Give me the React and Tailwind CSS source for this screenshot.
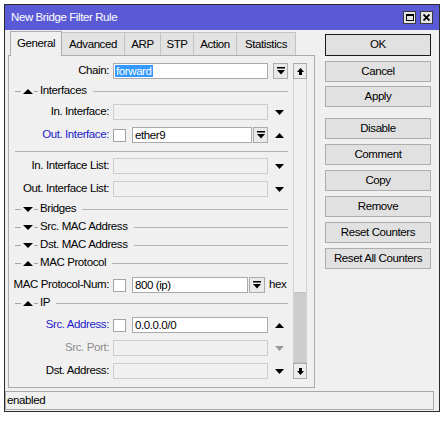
import React from 'react';

const Tri = ({ dir = 'down', color = '#000', w = 9, h = 5 }) => (
  <svg width={w} height={h} viewBox={`0 0 ${w} ${h}`} className="block">
    {dir === 'down'
      ? <polygon points={`0,0 ${w},0 ${w / 2},${h}`} fill={color} />
      : <polygon points={`0,${h} ${w},${h} ${w / 2},0`} fill={color} />}
  </svg>
);

const ComboBtn = ({ className = '' }) => (
  <div className={`w-[15px] h-[16px] shrink-0 border border-[#acacac] bg-[#e9e9e9] flex items-center justify-center ${className}`}>
    <svg width="8" height="8" viewBox="0 0 8 8">
      <rect x="0" y="0" width="8" height="1.5" fill="#000" />
      <polygon points="0,3 8,3 4,7.5" fill="#000" />
    </svg>
  </div>
);

const Field = ({ value, disabled, className = 'w-[155px]', selected }) => (
  <div
    className={`h-[16px] shrink-0 border flex items-center px-[1px] ${
      disabled ? 'bg-[#f0f0f0] border-[#cccccc]' : 'bg-white border-[#a9a9a9]'
    } ${className}`}
  >
    {value && (
      <span className={`leading-[12px] px-[1px] ${selected ? 'bg-[#3399ff] text-white' : ''}`}>{value}</span>
    )}
  </div>
);

const Check = () => <div className="w-[13px] h-[13px] shrink-0 border border-[#a4a4a4] bg-white" />;

const Label = ({ children, color = 'text-black' }) => (
  <div className={`w-[101px] shrink-0 text-right pr-[1px] whitespace-nowrap ${color}`}>{children}</div>
);

// little triangle column right of the fields
const Trig = ({ children }) => (
  <div className="w-[22px] shrink-0 flex items-center justify-center pl-[1px]">{children}</div>
);

const Row = ({ label, color, children, trig, className = '' }) => (
  <div className={`flex items-center h-[16px] ${className}`}>
    <Label color={color}>{label}</Label>
    <div className="flex items-center ml-[3px] w-[155px] shrink-0">{children}</div>
    <Trig>{trig}</Trig>
  </div>
);

const Section = ({ label, open, className = 'h-[18px]' }) => (
  <div className={`flex items-center pl-[6px] pr-[2px] ${className}`}>
    <div className="w-[6px] h-px bg-[#a6a6a6]" />
    <div className="ml-[2px]">
      <Tri dir={open ? 'up' : 'down'} w={10} h={5} />
    </div>
    <div className="w-[4px] h-px bg-[#a6a6a6] ml-px" />
    <span className="ml-[2px]">{label}</span>
    <div className="flex-1 h-px bg-[#b4b4b4] ml-[6px]" />
  </div>
);

const ScrollArrow = ({ up }) => (
  <div className="h-[16px] border border-[#acacac] bg-[#ececec] flex items-center justify-center shrink-0">
    <svg width="7" height="7" viewBox="0 0 7 7" className={up ? '' : 'rotate-180'}>
      <polygon points="3.5,0 7,4 0,4" fill="#000" />
      <rect x="2" y="4" width="3" height="3" fill="#000" />
    </svg>
  </div>
);

const tabs = [
  ['General', 'w-[52px]'],
  ['Advanced', 'w-[63px]'],
  ['ARP', 'w-[36px]'],
  ['STP', 'w-[33px]'],
  ['Action', 'w-[43px]'],
  ['Statistics', 'w-[59px]'],
];

const buttons = [
  ['OK', 'mt-[4px] h-[22px] border-[#1a1a1a]'],
  ['Cancel', 'mt-[5px] h-[21px] border-[#adadad]'],
  ['Apply', 'mt-[4px] h-[21px] border-[#adadad]'],
  ['Disable', 'mt-[11px] h-[21px] border-[#adadad]'],
  ['Comment', 'mt-[5px] h-[21px] border-[#adadad]'],
  ['Copy', 'mt-[5px] h-[21px] border-[#adadad]'],
  ['Remove', 'mt-[5px] h-[21px] border-[#adadad]'],
  ['Reset Counters', 'mt-[5px] h-[21px] border-[#adadad]'],
  ['Reset All Counters', 'mt-[5px] h-[21px] border-[#adadad]'],
];

export default function App() {
  return (
    <div className="w-[447px] h-[422px] bg-white pt-[4px] pl-[4px] font-['Liberation_Sans',Arial,sans-serif] text-[11.5px] tracking-[-0.4px] text-black leading-none">
      <div className="w-[436px] border border-[#2b2b2b] bg-[#f0f0f0]">
        {/* title bar */}
        <div className="h-[25px] bg-[#5a5ad6] flex items-center pl-[6px] pr-[6px]">
          <span className="text-white flex-1">New Bridge Filter Rule</span>
          <div className="w-[13px] h-[13px] bg-[#e4e4e4] border border-[#3a3a3a] flex items-center justify-center">
            <div className="w-[8px] h-[7px] border border-black border-t-2" />
          </div>
          <div className="w-[13px] h-[13px] bg-[#e4e4e4] border border-[#3a3a3a] flex items-center justify-center ml-[4px]">
            <svg width="7" height="7" viewBox="0 0 7 7">
              <path d="M0.5 0.5 L6.5 6.5 M6.5 0.5 L0.5 6.5" stroke="#000" strokeWidth="1.8" />
            </svg>
          </div>
        </div>

        <div className="flex pl-[3px]">
          {/* left: tabs + panel */}
          <div className="w-[307px] shrink-0">
            <div className="h-[25px] flex items-end pl-[2px]">
              {tabs.map(([t, w], i) =>
                i === 0 ? (
                  <div key={t} className={`${w} h-[25px] -mb-px relative z-10 bg-[#f0f0f0] border border-b-0 border-[#acacac] flex items-center justify-center pb-[1px]`}>
                    {t}
                  </div>
                ) : (
                  <div key={t} className={`${w} h-[23px] bg-[#e3e3e3] border border-l-0 border-b-0 border-[#c4c4c4] flex items-center justify-center pt-[2px]`}>
                    {t}
                  </div>
                )
              )}
            </div>

            <div className="h-[333px] border border-[#acacac] flex pt-[7px] pb-[8px] pr-[7px]">
              <div className="w-[281px] shrink-0">
                <Row label="Chain:" trig={<ComboBtn className="ml-[2px] w-[14px]" />}>
                  <Field value="forward" selected />
                </Row>
                <Section label="Interfaces" open className="h-[16px] mt-[4px]" />
                <Row label="In. Interface:" className="mt-[5px]" trig={<Tri />}>
                  <Field disabled />
                </Row>
                <Row label="Out. Interface:" color="text-[#1c1cc8]" className="mt-[7px]" trig={<Tri dir="up" />}>
                  <Check />
                  <Field value="ether9" className="w-[120px] ml-[6px]" />
                  <ComboBtn className="ml-[1px]" />
                </Row>
                <div className="mt-[8px] ml-[6px] mr-[2px] h-px bg-[#b4b4b4]" />
                <Row label="In. Interface List:" className="mt-[6px]" trig={<Tri />}>
                  <Field disabled />
                </Row>
                <Row label="Out. Interface List:" className="mt-[7px]" trig={<Tri />}>
                  <Field disabled />
                </Row>
                <div className="mt-[3px]">
                  <Section label="Bridges" />
                  <Section label="Src. MAC Address" />
                  <Section label="Dst. MAC Address" />
                  <Section label="MAC Protocol" open />
                </div>
                <div className="flex items-center h-[16px] mt-[5px]">
                  <Label>MAC Protocol-Num:</Label>
                  <div className="flex items-center ml-[3px]">
                    <Check />
                    <Field value="800 (ip)" className="w-[116px] ml-[6px]" />
                    <ComboBtn className="ml-[1px] w-[16px]" />
                    <span className="ml-[4px]">hex</span>
                  </div>
                </div>
                <Section label="IP" open className="h-[18px] mt-[1px]" />
                <Row label="Src. Address:" color="text-[#1c1cc8]" className="mt-[5px]" trig={<Tri dir="up" />}>
                  <Check />
                  <Field value="0.0.0.0/0" className="w-[136px] ml-[6px]" />
                </Row>
                <Row label="Src. Port:" color="text-[#8c8c8c]" className="mt-[7px]" trig={<Tri color="#9a9a9a" />}>
                  <Field disabled />
                </Row>
                <Row label="Dst. Address:" className="mt-[7px]" trig={<Tri />}>
                  <Field disabled />
                </Row>
              </div>

              {/* scrollbar */}
              <div className="ml-[3px] w-[14px] flex flex-col">
                <ScrollArrow up />
                <div className="flex-1 border-x border-[#d2d2d2] bg-[#f0f0f0] flex flex-col justify-end">
                  <div className="h-[71px] bg-[#cdcdcd] border-y border-[#c0c0c0]" />
                </div>
                <ScrollArrow />
              </div>
            </div>
          </div>

          {/* right: buttons */}
          <div className="ml-[10px] w-[106px] flex flex-col">
            {buttons.map(([t, c]) => (
              <div key={t} className={`${c} border bg-[#e1e1e1] flex items-center justify-center whitespace-nowrap`}>
                {t}
              </div>
            ))}
          </div>
        </div>

        {/* status bar */}
        <div className="mt-[3px] mr-[5px] mb-[1px] h-[19px] border border-[#a9a9a9] flex items-center pl-[1px]">
          enabled
        </div>
      </div>
    </div>
  );
}
